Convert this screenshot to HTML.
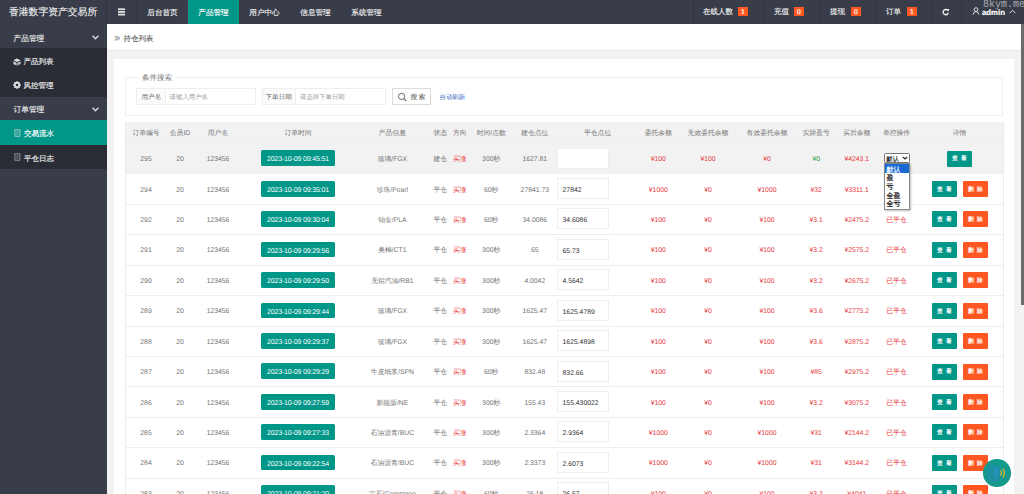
<!DOCTYPE html>
<html><head><meta charset="utf-8"><title>持仓列表</title>
<style>
*{margin:0;padding:0;box-sizing:border-box}
html,body{width:1024px;height:494px;overflow:hidden;background:#f2f2f2;font-family:"Liberation Sans",sans-serif;color:#666;text-rendering:geometricPrecision}
.a{position:absolute;white-space:nowrap}
#top{position:absolute;left:0;top:0;width:1024px;height:24px;background:#393D49;-webkit-text-stroke:0.15px currentColor}
#logo{position:absolute;left:0;top:1px;width:106px;height:24px;line-height:24px;color:#ececec;font-size:9.8px;padding-left:9px;white-space:nowrap}
.nav{position:absolute;top:0;height:24px;line-height:24px;color:#ececec;font-size:7.6px;text-align:center;white-space:nowrap}
.nav span{position:relative;top:0.7px}
.nav.on{background:#009688;color:#fff}
.sep{position:absolute;top:0;width:1px;height:24px;background:#33363f}
.bdg{position:absolute;top:7px;width:10px;height:9px;background:#FF5722;color:#fff;font-size:6.8px;line-height:9px;text-align:center}
.bdg span{position:relative;top:1.2px}
#side{position:absolute;left:0;top:24px;width:107px;height:470px;background:#393D49}
.sb{position:absolute;left:0;width:107px}
.st{position:absolute;height:24px;line-height:24px;color:#ececec;font-size:7.6px;white-space:nowrap;-webkit-text-stroke:0.15px currentColor}
#crumb{position:absolute;left:107px;top:24px;width:917px;height:27px;background:#fff;border-bottom:1px solid #e8e8e8}
#card{position:absolute;left:113.5px;top:59px;width:900.5px;height:435px;background:#fff}
.fs{position:absolute;left:125px;top:76.5px;width:878px;height:39.5px;border:1px solid #eeeeee}
.legend{position:absolute;left:139px;top:72.7px;padding:0 3px;background:#fff;font-size:7.5px;line-height:10px;color:#777}
.lbl{position:absolute;top:88px;height:17.4px;border:1px solid #eeeeee;background:#FBFBFB}
.ipt{position:absolute;top:88px;height:17.4px;border:1px solid #eeeeee;border-left:none;background:#fff}
.sbtn{position:absolute;left:391.5px;top:88.2px;width:39.2px;height:17.3px;border:1px solid #dcdcdc;background:#fff}
.tx{position:absolute;line-height:10px;white-space:nowrap}
.thead{position:absolute;background:#F2F2F2}
.tr{position:absolute;border-top:1px solid #eeeeee;background:#fff}
.tr.hov{background:#F2F2F2}
.c{position:absolute;width:120px;text-align:center;font-size:6.8px;color:#737373;white-space:nowrap}
.red{color:#e8393c}
.green{color:#22a03a}
.badge{position:absolute;width:74px;height:15.8px;line-height:15.8px;background:#009688;color:#fff;border-radius:1.5px;text-align:center;font-size:7px;letter-spacing:-0.15px;white-space:nowrap}
.badge span{position:relative;top:2px}
.inp{position:absolute;width:52.5px;height:21px;line-height:19px;border:1px solid #eeeeee;background:#fff;color:#333;font-size:6.8px;padding-left:5px;white-space:nowrap}
.inp span{position:relative;top:2px}
.btn{position:absolute;width:25px;height:16px;line-height:16px;letter-spacing:3.2px;text-indent:3.2px;text-align:center;color:#fff;font-size:5.8px;font-weight:bold;border-radius:1px;white-space:nowrap;-webkit-text-stroke:0}
.btn span{position:relative;top:0.9px}
.teal{background:#009688}
.orange{background:#FF5722}
</style></head><body>
<div id="top">
  <div id="logo">香港数字资产交易所</div>
  <div class="sep" style="left:106px"></div>
  <svg width="9" height="8" viewBox="0 0 9 8" style="position:absolute;left:117px;top:7.5px"><rect x="1" y="0.3" width="7" height="1.8" fill="#e0e0e0"/><rect x="1" y="3.0" width="7" height="1.8" fill="#e0e0e0"/><rect x="1" y="5.7" width="7" height="1.8" fill="#e0e0e0"/></svg>
  <div class="sep" style="left:136px"></div>
  <div class="nav" style="left:137px;width:51px"><span>后台首页</span></div>
  <div class="nav on" style="left:188px;width:51px"><span>产品管理</span></div>
  <div class="nav" style="left:239px;width:51px"><span>用户中心</span></div>
  <div class="nav" style="left:290px;width:51px"><span>信息管理</span></div>
  <div class="nav" style="left:341px;width:51px"><span>系统管理</span></div>

  <div class="sep" style="left:693px"></div>
  <div class="nav" style="left:703px;width:30px;font-size:7.5px">在线人数</div><div class="bdg" style="left:738px"><span>1</span></div>
  <div class="sep" style="left:763px"></div>
  <div class="nav" style="left:774px;width:15px;font-size:7.5px">充值</div><div class="bdg" style="left:794px"><span>0</span></div>
  <div class="sep" style="left:819px"></div>
  <div class="nav" style="left:830px;width:15px;font-size:7.5px">提现</div><div class="bdg" style="left:851px"><span>0</span></div>
  <div class="sep" style="left:875px"></div>
  <div class="nav" style="left:886px;width:15px;font-size:7.5px">订单</div><div class="bdg" style="left:907px"><span>1</span></div>
  <div class="sep" style="left:932px"></div>
  <svg width="8" height="8" viewBox="0 0 8 8" style="position:absolute;left:942px;top:8px"><path d="M5.9 2.6 A2.6 2.6 0 1 0 6.3 4.8" fill="none" stroke="#eee" stroke-width="1.4"/><path d="M4.6 1 L7 1 L7 3.4 Z" fill="#eee"/></svg>
  <div class="sep" style="left:961px"></div>
  <svg width="8" height="8" viewBox="0 0 8 8" style="position:absolute;left:972px;top:7px"><circle cx="4" cy="2.6" r="1.9" fill="none" stroke="#ddd" stroke-width="1"/><path d="M1 7.6 Q1.5 4.6 4 4.6 Q6.5 4.6 7 7.6" fill="none" stroke="#ddd" stroke-width="1"/></svg>
  <div class="nav" style="left:982px;width:23px;font-weight:bold;color:#fff;font-size:7.8px"><span>admin</span></div>
  <svg width="7" height="5" viewBox="0 0 7 5" style="position:absolute;left:1009px;top:9px"><path d="M0.7 4.2 L3.5 1.2 L6.3 4.2" fill="none" stroke="#ddd" stroke-width="1"/></svg>
  <div style="position:absolute;left:983px;top:0px;font-family:'Liberation Mono',monospace;font-size:10px;line-height:10px;color:rgba(215,215,218,0.72);transform:scaleY(1.1);transform-origin:0 0;-webkit-text-stroke:0">8kym.me</div>
</div>

<div id="side"></div>
<div class="sb" style="top:48.4px;height:48.6px;background:#2A2D36"></div>
<div class="sb" style="top:120.4px;height:24.6px;background:#009688"></div>
<div class="sb" style="top:145px;height:24.4px;background:#2A2D36"></div>
<div class="st" style="left:13.5px;top:26.6px;font-size:7.7px">产品管理</div>
<svg width="7" height="5" viewBox="0 0 7 5" style="position:absolute;left:91.5px;top:34.5px"><path d="M0.6 0.8 L3.5 3.8 L6.4 0.8" fill="none" stroke="#ddd" stroke-width="1.3"/></svg>
<svg width="8" height="8" viewBox="0 0 8 8" style="position:absolute;left:13px;top:57.5px"><path d="M4 0.6 L7.6 2.3 L4 4 L0.4 2.3 Z" fill="#e0e0e0"/><path d="M0.4 3.3 L3.6 4.8 L3.6 7.6 L0.4 6 Z" fill="#cfcfcf"/><path d="M7.6 3.3 L4.4 4.8 L4.4 7.6 L7.6 6 Z" fill="#bdbdbd"/></svg>
<div class="st" style="left:23.4px;top:50.1px;font-size:7.5px">产品列表</div>
<svg width="8" height="8" viewBox="0 0 8 8" style="position:absolute;left:13px;top:81px"><path d="M7.81 3.15 L7.81 4.85 L6.72 4.99 L6.63 5.22 L7.29 6.09 L6.09 7.29 L5.22 6.63 L4.99 6.72 L4.85 7.81 L3.15 7.81 L3.01 6.72 L2.78 6.63 L1.91 7.29 L0.71 6.09 L1.37 5.22 L1.28 4.99 L0.19 4.85 L0.19 3.15 L1.28 3.01 L1.37 2.78 L0.71 1.91 L1.91 0.71 L2.78 1.37 L3.01 1.28 L3.15 0.19 L4.85 0.19 L4.99 1.28 L5.22 1.37 L6.09 0.71 L7.29 1.91 L6.63 2.78 L6.72 3.01Z M5.3 4 A1.3 1.3 0 1 0 2.7 4 A1.3 1.3 0 1 0 5.3 4Z" fill="#ddd" fill-rule="evenodd"/></svg>
<div class="st" style="left:23.4px;top:73.9px;font-size:7.5px">风控管理</div>
<div class="st" style="left:13.5px;top:98.4px;font-size:7.7px">订单管理</div>
<svg width="7" height="5" viewBox="0 0 7 5" style="position:absolute;left:91.5px;top:106.5px"><path d="M0.6 0.8 L3.5 3.8 L6.4 0.8" fill="none" stroke="#ddd" stroke-width="1.3"/></svg>
<svg width="7" height="8" viewBox="0 0 7 8" style="position:absolute;left:14px;top:129.3px"><rect x="0.9" y="0.8" width="5" height="6.4" fill="none" stroke="#c8d8d6" stroke-width="0.8"/><path d="M2.3 2.8 H4.5 M2.3 4.2 H4.5 M2.3 5.6 H3.8" stroke="#c8d8d6" stroke-width="0.6"/></svg>
<div class="st" style="left:24px;top:122.2px;font-size:7.5px;color:#fff">交易流水</div>
<svg width="7" height="8" viewBox="0 0 7 8" style="position:absolute;left:14px;top:153.3px"><rect x="0.9" y="0.8" width="5" height="6.4" fill="none" stroke="#aaa" stroke-width="0.8"/><path d="M2.3 2.8 H4.5 M2.3 4.2 H4.5 M2.3 5.6 H3.8" stroke="#aaa" stroke-width="0.6"/></svg>
<div class="st" style="left:24px;top:146.7px;font-size:7.5px">平仓日志</div>

<div id="crumb">
  <div style="position:absolute;left:7.3px;top:1.2px;line-height:27px;font-size:10.5px;color:#999;white-space:nowrap;-webkit-text-stroke:0.3px currentColor">»</div><div style="position:absolute;left:16.5px;top:0.5px;line-height:27px;font-size:7.45px;color:#555;white-space:nowrap;-webkit-text-stroke:0.08px currentColor">持仓列表</div>
</div>
<div id="card"></div>
<div class="fs"></div>
<div class="legend">条件搜索</div>
<div class="lbl" style="left:136px;width:30px"></div>
<div class="tx" style="left:141.5px;top:93.1px;font-size:6.6px;color:#666">用户名</div>
<div class="ipt" style="left:166px;width:90px"></div>
<div class="tx" style="left:169.6px;top:93px;font-size:6.4px;color:#a0a0a0">请输入用户名</div>
<div class="lbl" style="left:262px;width:34px"></div>
<div class="tx" style="left:265.5px;top:93.1px;font-size:6.6px;color:#666">下单日期</div>
<div class="ipt" style="left:296px;width:90px"></div>
<div class="tx" style="left:300px;top:93px;font-size:6.4px;color:#a0a0a0">请选择下单日期</div>
<div class="sbtn"></div>
<svg width="10" height="10" viewBox="0 0 10 10" style="position:absolute;left:397px;top:92px"><circle cx="4.6" cy="4.4" r="3.1" fill="none" stroke="#666" stroke-width="1"/><path d="M6.9 6.7 L9.2 9" stroke="#666" stroke-width="1.2"/></svg>
<div class="tx" style="left:410.5px;top:93px;font-size:6.8px;color:#444;letter-spacing:1.2px">搜索</div>
<div class="tx" style="left:439.5px;top:93px;font-size:6.4px;color:#3568c8">自动刷新</div>

<div class="thead" style="left:125px;top:122px;width:878px;height:21px"></div>
<div class="c hc" style="left:86.0px;top:122.70px;height:21px;line-height:21px">订单编号</div>
<div class="c hc" style="left:120.0px;top:122.70px;height:21px;line-height:21px">会员ID</div>
<div class="c hc" style="left:158.0px;top:122.70px;height:21px;line-height:21px">用户名</div>
<div class="c hc" style="left:238.0px;top:122.70px;height:21px;line-height:21px">订单时间</div>
<div class="c hc" style="left:332.4px;top:122.70px;height:21px;line-height:21px">产品信息</div>
<div class="c hc" style="left:380.3px;top:122.70px;height:21px;line-height:21px">状态</div>
<div class="c hc" style="left:399.7px;top:122.70px;height:21px;line-height:21px">方向</div>
<div class="c hc" style="left:431.2px;top:122.70px;height:21px;line-height:21px">时间/点数</div>
<div class="c hc" style="left:474.8px;top:122.70px;height:21px;line-height:21px">建仓点位</div>
<div class="c hc" style="left:537.6px;top:122.70px;height:21px;line-height:21px">平仓点位</div>
<div class="c hc" style="left:598.3px;top:122.70px;height:21px;line-height:21px">委托余额</div>
<div class="c hc" style="left:648.0px;top:122.70px;height:21px;line-height:21px">无效委托余额</div>
<div class="c hc" style="left:707.0px;top:122.70px;height:21px;line-height:21px">有效委托余额</div>
<div class="c hc" style="left:756.2px;top:122.70px;height:21px;line-height:21px">实际盈亏</div>
<div class="c hc" style="left:796.8px;top:122.70px;height:21px;line-height:21px">买后余额</div>
<div class="c hc" style="left:836.5px;top:122.70px;height:21px;line-height:21px">单控操作</div>
<div class="c hc" style="left:899.6px;top:122.70px;height:21px;line-height:21px">详情</div>
<div class="tr hov" style="left:125px;top:142.9px;width:878px;height:30.43px"></div>
<div class="c" style="left:86.0px;top:145.10px;height:30.43px;line-height:30.43px">295</div>
<div class="c" style="left:120.0px;top:145.10px;height:30.43px;line-height:30.43px">20</div>
<div class="c" style="left:158.0px;top:145.10px;height:30.43px;line-height:30.43px">123456</div>
<div class="badge" style="left:261px;top:150.4px"><span>2023-10-09 09:45:51</span></div>
<div class="c" style="left:332.4px;top:145.10px;height:30.43px;line-height:30.43px">玻璃/FGX</div>
<div class="c" style="left:380.3px;top:145.10px;height:30.43px;line-height:30.43px">建仓</div>
<div class="c red" style="left:399.7px;top:145.10px;height:30.43px;line-height:30.43px">买涨</div>
<div class="c" style="left:431.2px;top:145.10px;height:30.43px;line-height:30.43px">300秒</div>
<div class="c" style="left:474.8px;top:145.10px;height:30.43px;line-height:30.43px">1627.81</div>
<div class="inp" style="left:556.6px;top:147.5px"><span></span></div>
<div class="c red" style="left:598.3px;top:145.10px;height:30.43px;line-height:30.43px">¥100</div>
<div class="c red" style="left:648.0px;top:145.10px;height:30.43px;line-height:30.43px">¥100</div>
<div class="c red" style="left:707.0px;top:145.10px;height:30.43px;line-height:30.43px">¥0</div>
<div class="c green" style="left:756.2px;top:145.10px;height:30.43px;line-height:30.43px">¥0</div>
<div class="c red" style="left:796.8px;top:145.10px;height:30.43px;line-height:30.43px">¥4243.1</div>
<div class="btn teal" style="left:947px;top:150.5px"><span>查看</span></div>
<div class="tr" style="left:125px;top:173.3px;width:878px;height:30.43px"></div>
<div class="c" style="left:86.0px;top:175.53px;height:30.43px;line-height:30.43px">294</div>
<div class="c" style="left:120.0px;top:175.53px;height:30.43px;line-height:30.43px">20</div>
<div class="c" style="left:158.0px;top:175.53px;height:30.43px;line-height:30.43px">123456</div>
<div class="badge" style="left:261px;top:180.8px"><span>2023-10-09 09:35:01</span></div>
<div class="c" style="left:332.4px;top:175.53px;height:30.43px;line-height:30.43px">珍珠/Pearl</div>
<div class="c" style="left:380.3px;top:175.53px;height:30.43px;line-height:30.43px">平仓</div>
<div class="c red" style="left:399.7px;top:175.53px;height:30.43px;line-height:30.43px">买涨</div>
<div class="c" style="left:431.2px;top:175.53px;height:30.43px;line-height:30.43px">60秒</div>
<div class="c" style="left:474.8px;top:175.53px;height:30.43px;line-height:30.43px">27841.73</div>
<div class="inp" style="left:556.6px;top:177.9px"><span>27842</span></div>
<div class="c red" style="left:598.3px;top:175.53px;height:30.43px;line-height:30.43px">¥1000</div>
<div class="c red" style="left:648.0px;top:175.53px;height:30.43px;line-height:30.43px">¥0</div>
<div class="c red" style="left:707.0px;top:175.53px;height:30.43px;line-height:30.43px">¥1000</div>
<div class="c red" style="left:756.2px;top:175.53px;height:30.43px;line-height:30.43px">¥32</div>
<div class="c red" style="left:796.8px;top:175.53px;height:30.43px;line-height:30.43px">¥3311.1</div>
<div class="c red" style="left:836.5px;top:175.53px;height:30.43px;line-height:30.43px">已平仓</div>
<div class="btn teal" style="left:932px;top:180.9px"><span>查看</span></div>
<div class="btn orange" style="left:963px;top:180.9px"><span>删除</span></div>
<div class="tr" style="left:125px;top:203.8px;width:878px;height:30.43px"></div>
<div class="c" style="left:86.0px;top:205.96px;height:30.43px;line-height:30.43px">292</div>
<div class="c" style="left:120.0px;top:205.96px;height:30.43px;line-height:30.43px">20</div>
<div class="c" style="left:158.0px;top:205.96px;height:30.43px;line-height:30.43px">123456</div>
<div class="badge" style="left:261px;top:211.3px"><span>2023-10-09 09:30:04</span></div>
<div class="c" style="left:332.4px;top:205.96px;height:30.43px;line-height:30.43px">铂金/PLA</div>
<div class="c" style="left:380.3px;top:205.96px;height:30.43px;line-height:30.43px">平仓</div>
<div class="c red" style="left:399.7px;top:205.96px;height:30.43px;line-height:30.43px">买涨</div>
<div class="c" style="left:431.2px;top:205.96px;height:30.43px;line-height:30.43px">60秒</div>
<div class="c" style="left:474.8px;top:205.96px;height:30.43px;line-height:30.43px">34.0086</div>
<div class="inp" style="left:556.6px;top:208.4px"><span>34.6086</span></div>
<div class="c red" style="left:598.3px;top:205.96px;height:30.43px;line-height:30.43px">¥100</div>
<div class="c red" style="left:648.0px;top:205.96px;height:30.43px;line-height:30.43px">¥0</div>
<div class="c red" style="left:707.0px;top:205.96px;height:30.43px;line-height:30.43px">¥100</div>
<div class="c red" style="left:756.2px;top:205.96px;height:30.43px;line-height:30.43px">¥3.1</div>
<div class="c red" style="left:796.8px;top:205.96px;height:30.43px;line-height:30.43px">¥2475.2</div>
<div class="c red" style="left:836.5px;top:205.96px;height:30.43px;line-height:30.43px">已平仓</div>
<div class="btn teal" style="left:932px;top:211.4px"><span>查看</span></div>
<div class="btn orange" style="left:963px;top:211.4px"><span>删除</span></div>
<div class="tr" style="left:125px;top:234.2px;width:878px;height:30.43px"></div>
<div class="c" style="left:86.0px;top:236.39px;height:30.43px;line-height:30.43px">291</div>
<div class="c" style="left:120.0px;top:236.39px;height:30.43px;line-height:30.43px">20</div>
<div class="c" style="left:158.0px;top:236.39px;height:30.43px;line-height:30.43px">123456</div>
<div class="badge" style="left:261px;top:241.7px"><span>2023-10-09 09:29:56</span></div>
<div class="c" style="left:332.4px;top:236.39px;height:30.43px;line-height:30.43px">美棉/CT1</div>
<div class="c" style="left:380.3px;top:236.39px;height:30.43px;line-height:30.43px">平仓</div>
<div class="c red" style="left:399.7px;top:236.39px;height:30.43px;line-height:30.43px">买涨</div>
<div class="c" style="left:431.2px;top:236.39px;height:30.43px;line-height:30.43px">300秒</div>
<div class="c" style="left:474.8px;top:236.39px;height:30.43px;line-height:30.43px">65</div>
<div class="inp" style="left:556.6px;top:238.8px"><span>65.73</span></div>
<div class="c red" style="left:598.3px;top:236.39px;height:30.43px;line-height:30.43px">¥100</div>
<div class="c red" style="left:648.0px;top:236.39px;height:30.43px;line-height:30.43px">¥0</div>
<div class="c red" style="left:707.0px;top:236.39px;height:30.43px;line-height:30.43px">¥100</div>
<div class="c red" style="left:756.2px;top:236.39px;height:30.43px;line-height:30.43px">¥3.2</div>
<div class="c red" style="left:796.8px;top:236.39px;height:30.43px;line-height:30.43px">¥2575.2</div>
<div class="c red" style="left:836.5px;top:236.39px;height:30.43px;line-height:30.43px">已平仓</div>
<div class="btn teal" style="left:932px;top:241.8px"><span>查看</span></div>
<div class="btn orange" style="left:963px;top:241.8px"><span>删除</span></div>
<div class="tr" style="left:125px;top:264.6px;width:878px;height:30.43px"></div>
<div class="c" style="left:86.0px;top:266.82px;height:30.43px;line-height:30.43px">290</div>
<div class="c" style="left:120.0px;top:266.82px;height:30.43px;line-height:30.43px">20</div>
<div class="c" style="left:158.0px;top:266.82px;height:30.43px;line-height:30.43px">123456</div>
<div class="badge" style="left:261px;top:272.1px"><span>2023-10-09 09:29:50</span></div>
<div class="c" style="left:332.4px;top:266.82px;height:30.43px;line-height:30.43px">无铅汽油/RB1</div>
<div class="c" style="left:380.3px;top:266.82px;height:30.43px;line-height:30.43px">平仓</div>
<div class="c red" style="left:399.7px;top:266.82px;height:30.43px;line-height:30.43px">买涨</div>
<div class="c" style="left:431.2px;top:266.82px;height:30.43px;line-height:30.43px">300秒</div>
<div class="c" style="left:474.8px;top:266.82px;height:30.43px;line-height:30.43px">4.0042</div>
<div class="inp" style="left:556.6px;top:269.2px"><span>4.5642</span></div>
<div class="c red" style="left:598.3px;top:266.82px;height:30.43px;line-height:30.43px">¥100</div>
<div class="c red" style="left:648.0px;top:266.82px;height:30.43px;line-height:30.43px">¥0</div>
<div class="c red" style="left:707.0px;top:266.82px;height:30.43px;line-height:30.43px">¥100</div>
<div class="c red" style="left:756.2px;top:266.82px;height:30.43px;line-height:30.43px">¥3.2</div>
<div class="c red" style="left:796.8px;top:266.82px;height:30.43px;line-height:30.43px">¥2675.2</div>
<div class="c red" style="left:836.5px;top:266.82px;height:30.43px;line-height:30.43px">已平仓</div>
<div class="btn teal" style="left:932px;top:272.2px"><span>查看</span></div>
<div class="btn orange" style="left:963px;top:272.2px"><span>删除</span></div>
<div class="tr" style="left:125px;top:295.1px;width:878px;height:30.43px"></div>
<div class="c" style="left:86.0px;top:297.25px;height:30.43px;line-height:30.43px">289</div>
<div class="c" style="left:120.0px;top:297.25px;height:30.43px;line-height:30.43px">20</div>
<div class="c" style="left:158.0px;top:297.25px;height:30.43px;line-height:30.43px">123456</div>
<div class="badge" style="left:261px;top:302.6px"><span>2023-10-09 09:29:44</span></div>
<div class="c" style="left:332.4px;top:297.25px;height:30.43px;line-height:30.43px">玻璃/FGX</div>
<div class="c" style="left:380.3px;top:297.25px;height:30.43px;line-height:30.43px">平仓</div>
<div class="c red" style="left:399.7px;top:297.25px;height:30.43px;line-height:30.43px">买涨</div>
<div class="c" style="left:431.2px;top:297.25px;height:30.43px;line-height:30.43px">300秒</div>
<div class="c" style="left:474.8px;top:297.25px;height:30.43px;line-height:30.43px">1625.47</div>
<div class="inp" style="left:556.6px;top:299.7px"><span>1625.4789</span></div>
<div class="c red" style="left:598.3px;top:297.25px;height:30.43px;line-height:30.43px">¥100</div>
<div class="c red" style="left:648.0px;top:297.25px;height:30.43px;line-height:30.43px">¥0</div>
<div class="c red" style="left:707.0px;top:297.25px;height:30.43px;line-height:30.43px">¥100</div>
<div class="c red" style="left:756.2px;top:297.25px;height:30.43px;line-height:30.43px">¥3.6</div>
<div class="c red" style="left:796.8px;top:297.25px;height:30.43px;line-height:30.43px">¥2775.2</div>
<div class="c red" style="left:836.5px;top:297.25px;height:30.43px;line-height:30.43px">已平仓</div>
<div class="btn teal" style="left:932px;top:302.7px"><span>查看</span></div>
<div class="btn orange" style="left:963px;top:302.7px"><span>删除</span></div>
<div class="tr" style="left:125px;top:325.5px;width:878px;height:30.43px"></div>
<div class="c" style="left:86.0px;top:327.68px;height:30.43px;line-height:30.43px">288</div>
<div class="c" style="left:120.0px;top:327.68px;height:30.43px;line-height:30.43px">20</div>
<div class="c" style="left:158.0px;top:327.68px;height:30.43px;line-height:30.43px">123456</div>
<div class="badge" style="left:261px;top:333.0px"><span>2023-10-09 09:29:37</span></div>
<div class="c" style="left:332.4px;top:327.68px;height:30.43px;line-height:30.43px">玻璃/FGX</div>
<div class="c" style="left:380.3px;top:327.68px;height:30.43px;line-height:30.43px">平仓</div>
<div class="c red" style="left:399.7px;top:327.68px;height:30.43px;line-height:30.43px">买涨</div>
<div class="c" style="left:431.2px;top:327.68px;height:30.43px;line-height:30.43px">300秒</div>
<div class="c" style="left:474.8px;top:327.68px;height:30.43px;line-height:30.43px">1625.47</div>
<div class="inp" style="left:556.6px;top:330.1px"><span>1625.4898</span></div>
<div class="c red" style="left:598.3px;top:327.68px;height:30.43px;line-height:30.43px">¥100</div>
<div class="c red" style="left:648.0px;top:327.68px;height:30.43px;line-height:30.43px">¥0</div>
<div class="c red" style="left:707.0px;top:327.68px;height:30.43px;line-height:30.43px">¥100</div>
<div class="c red" style="left:756.2px;top:327.68px;height:30.43px;line-height:30.43px">¥3.6</div>
<div class="c red" style="left:796.8px;top:327.68px;height:30.43px;line-height:30.43px">¥2875.2</div>
<div class="c red" style="left:836.5px;top:327.68px;height:30.43px;line-height:30.43px">已平仓</div>
<div class="btn teal" style="left:932px;top:333.1px"><span>查看</span></div>
<div class="btn orange" style="left:963px;top:333.1px"><span>删除</span></div>
<div class="tr" style="left:125px;top:355.9px;width:878px;height:30.43px"></div>
<div class="c" style="left:86.0px;top:358.11px;height:30.43px;line-height:30.43px">287</div>
<div class="c" style="left:120.0px;top:358.11px;height:30.43px;line-height:30.43px">20</div>
<div class="c" style="left:158.0px;top:358.11px;height:30.43px;line-height:30.43px">123456</div>
<div class="badge" style="left:261px;top:363.4px"><span>2023-10-09 09:29:29</span></div>
<div class="c" style="left:332.4px;top:358.11px;height:30.43px;line-height:30.43px">牛皮纸浆/SPN</div>
<div class="c" style="left:380.3px;top:358.11px;height:30.43px;line-height:30.43px">平仓</div>
<div class="c red" style="left:399.7px;top:358.11px;height:30.43px;line-height:30.43px">买涨</div>
<div class="c" style="left:431.2px;top:358.11px;height:30.43px;line-height:30.43px">60秒</div>
<div class="c" style="left:474.8px;top:358.11px;height:30.43px;line-height:30.43px">832.48</div>
<div class="inp" style="left:556.6px;top:360.5px"><span>832.66</span></div>
<div class="c red" style="left:598.3px;top:358.11px;height:30.43px;line-height:30.43px">¥100</div>
<div class="c red" style="left:648.0px;top:358.11px;height:30.43px;line-height:30.43px">¥0</div>
<div class="c red" style="left:707.0px;top:358.11px;height:30.43px;line-height:30.43px">¥100</div>
<div class="c red" style="left:756.2px;top:358.11px;height:30.43px;line-height:30.43px">¥85</div>
<div class="c red" style="left:796.8px;top:358.11px;height:30.43px;line-height:30.43px">¥2975.2</div>
<div class="c red" style="left:836.5px;top:358.11px;height:30.43px;line-height:30.43px">已平仓</div>
<div class="btn teal" style="left:932px;top:363.5px"><span>查看</span></div>
<div class="btn orange" style="left:963px;top:363.5px"><span>删除</span></div>
<div class="tr" style="left:125px;top:386.3px;width:878px;height:30.43px"></div>
<div class="c" style="left:86.0px;top:388.54px;height:30.43px;line-height:30.43px">286</div>
<div class="c" style="left:120.0px;top:388.54px;height:30.43px;line-height:30.43px">20</div>
<div class="c" style="left:158.0px;top:388.54px;height:30.43px;line-height:30.43px">123456</div>
<div class="badge" style="left:261px;top:393.8px"><span>2023-10-09 09:27:59</span></div>
<div class="c" style="left:332.4px;top:388.54px;height:30.43px;line-height:30.43px">新能源/NE</div>
<div class="c" style="left:380.3px;top:388.54px;height:30.43px;line-height:30.43px">平仓</div>
<div class="c red" style="left:399.7px;top:388.54px;height:30.43px;line-height:30.43px">买涨</div>
<div class="c" style="left:431.2px;top:388.54px;height:30.43px;line-height:30.43px">300秒</div>
<div class="c" style="left:474.8px;top:388.54px;height:30.43px;line-height:30.43px">155.43</div>
<div class="inp" style="left:556.6px;top:390.9px"><span>155.430022</span></div>
<div class="c red" style="left:598.3px;top:388.54px;height:30.43px;line-height:30.43px">¥100</div>
<div class="c red" style="left:648.0px;top:388.54px;height:30.43px;line-height:30.43px">¥0</div>
<div class="c red" style="left:707.0px;top:388.54px;height:30.43px;line-height:30.43px">¥100</div>
<div class="c red" style="left:756.2px;top:388.54px;height:30.43px;line-height:30.43px">¥3.2</div>
<div class="c red" style="left:796.8px;top:388.54px;height:30.43px;line-height:30.43px">¥3075.2</div>
<div class="c red" style="left:836.5px;top:388.54px;height:30.43px;line-height:30.43px">已平仓</div>
<div class="btn teal" style="left:932px;top:393.9px"><span>查看</span></div>
<div class="btn orange" style="left:963px;top:393.9px"><span>删除</span></div>
<div class="tr" style="left:125px;top:416.8px;width:878px;height:30.43px"></div>
<div class="c" style="left:86.0px;top:418.97px;height:30.43px;line-height:30.43px">285</div>
<div class="c" style="left:120.0px;top:418.97px;height:30.43px;line-height:30.43px">20</div>
<div class="c" style="left:158.0px;top:418.97px;height:30.43px;line-height:30.43px">123456</div>
<div class="badge" style="left:261px;top:424.3px"><span>2023-10-09 09:27:33</span></div>
<div class="c" style="left:332.4px;top:418.97px;height:30.43px;line-height:30.43px">石油沥青/BUC</div>
<div class="c" style="left:380.3px;top:418.97px;height:30.43px;line-height:30.43px">平仓</div>
<div class="c red" style="left:399.7px;top:418.97px;height:30.43px;line-height:30.43px">买涨</div>
<div class="c" style="left:431.2px;top:418.97px;height:30.43px;line-height:30.43px">300秒</div>
<div class="c" style="left:474.8px;top:418.97px;height:30.43px;line-height:30.43px">2.3364</div>
<div class="inp" style="left:556.6px;top:421.4px"><span>2.9364</span></div>
<div class="c red" style="left:598.3px;top:418.97px;height:30.43px;line-height:30.43px">¥1000</div>
<div class="c red" style="left:648.0px;top:418.97px;height:30.43px;line-height:30.43px">¥0</div>
<div class="c red" style="left:707.0px;top:418.97px;height:30.43px;line-height:30.43px">¥1000</div>
<div class="c red" style="left:756.2px;top:418.97px;height:30.43px;line-height:30.43px">¥31</div>
<div class="c red" style="left:796.8px;top:418.97px;height:30.43px;line-height:30.43px">¥2144.2</div>
<div class="c red" style="left:836.5px;top:418.97px;height:30.43px;line-height:30.43px">已平仓</div>
<div class="btn teal" style="left:932px;top:424.4px"><span>查看</span></div>
<div class="btn orange" style="left:963px;top:424.4px"><span>删除</span></div>
<div class="tr" style="left:125px;top:447.2px;width:878px;height:30.43px"></div>
<div class="c" style="left:86.0px;top:449.40px;height:30.43px;line-height:30.43px">284</div>
<div class="c" style="left:120.0px;top:449.40px;height:30.43px;line-height:30.43px">20</div>
<div class="c" style="left:158.0px;top:449.40px;height:30.43px;line-height:30.43px">123456</div>
<div class="badge" style="left:261px;top:454.7px"><span>2023-10-09 09:22:54</span></div>
<div class="c" style="left:332.4px;top:449.40px;height:30.43px;line-height:30.43px">石油沥青/BUC</div>
<div class="c" style="left:380.3px;top:449.40px;height:30.43px;line-height:30.43px">平仓</div>
<div class="c red" style="left:399.7px;top:449.40px;height:30.43px;line-height:30.43px">买涨</div>
<div class="c" style="left:431.2px;top:449.40px;height:30.43px;line-height:30.43px">300秒</div>
<div class="c" style="left:474.8px;top:449.40px;height:30.43px;line-height:30.43px">2.3373</div>
<div class="inp" style="left:556.6px;top:451.8px"><span>2.6073</span></div>
<div class="c red" style="left:598.3px;top:449.40px;height:30.43px;line-height:30.43px">¥1000</div>
<div class="c red" style="left:648.0px;top:449.40px;height:30.43px;line-height:30.43px">¥0</div>
<div class="c red" style="left:707.0px;top:449.40px;height:30.43px;line-height:30.43px">¥1000</div>
<div class="c red" style="left:756.2px;top:449.40px;height:30.43px;line-height:30.43px">¥31</div>
<div class="c red" style="left:796.8px;top:449.40px;height:30.43px;line-height:30.43px">¥3144.2</div>
<div class="c red" style="left:836.5px;top:449.40px;height:30.43px;line-height:30.43px">已平仓</div>
<div class="btn teal" style="left:932px;top:454.8px"><span>查看</span></div>
<div class="btn orange" style="left:963px;top:454.8px"><span>删除</span></div>
<div class="tr" style="left:125px;top:477.6px;width:878px;height:30.43px"></div>
<div class="c" style="left:86.0px;top:479.83px;height:30.43px;line-height:30.43px">283</div>
<div class="c" style="left:120.0px;top:479.83px;height:30.43px;line-height:30.43px">20</div>
<div class="c" style="left:158.0px;top:479.83px;height:30.43px;line-height:30.43px">123456</div>
<div class="badge" style="left:261px;top:485.1px"><span>2023-10-09 09:21:20</span></div>
<div class="c" style="left:332.4px;top:479.83px;height:30.43px;line-height:30.43px">宝石/Gemstone</div>
<div class="c" style="left:380.3px;top:479.83px;height:30.43px;line-height:30.43px">平仓</div>
<div class="c red" style="left:399.7px;top:479.83px;height:30.43px;line-height:30.43px">买涨</div>
<div class="c" style="left:431.2px;top:479.83px;height:30.43px;line-height:30.43px">60秒</div>
<div class="c" style="left:474.8px;top:479.83px;height:30.43px;line-height:30.43px">26.18</div>
<div class="inp" style="left:556.6px;top:482.2px"><span>26.57</span></div>
<div class="c red" style="left:598.3px;top:479.83px;height:30.43px;line-height:30.43px">¥100</div>
<div class="c red" style="left:648.0px;top:479.83px;height:30.43px;line-height:30.43px">¥0</div>
<div class="c red" style="left:707.0px;top:479.83px;height:30.43px;line-height:30.43px">¥100</div>
<div class="c red" style="left:756.2px;top:479.83px;height:30.43px;line-height:30.43px">¥3.2</div>
<div class="c red" style="left:796.8px;top:479.83px;height:30.43px;line-height:30.43px">¥4041</div>
<div class="c red" style="left:836.5px;top:479.83px;height:30.43px;line-height:30.43px">已平仓</div>
<div class="btn teal" style="left:932px;top:485.2px"><span>查看</span></div>
<div class="btn orange" style="left:963px;top:485.2px"><span>删除</span></div>
<div style="position:absolute;left:125px;top:122px;width:1px;height:372px;background:#ececec"></div>
<div style="position:absolute;left:1003px;top:122px;width:1px;height:372px;background:#ececec"></div>

<!-- select + dropdown -->
<div style="position:absolute;left:884px;top:153.2px;width:26px;height:9.8px;border:1px solid #767676;border-radius:1.5px;background:#fff"></div>
<div class="tx" style="left:886.5px;top:154.5px;font-size:6.2px;line-height:9px;color:#111;-webkit-text-stroke:0.15px currentColor">默认</div>
<svg width="6" height="4" viewBox="0 0 6 4" style="position:absolute;left:901.5px;top:156.3px"><path d="M0.8 0.8 L3 3 L5.2 0.8" fill="none" stroke="#222" stroke-width="1.2"/></svg>
<div style="position:absolute;left:884px;top:163px;width:26px;height:47px;border:1px solid #888;background:#fff;box-shadow:1px 1px 2px rgba(0,0,0,.25);font-size:7px;color:#000;-webkit-text-stroke:0.2px currentColor;white-space:nowrap">
  <div style="height:9.3px;line-height:9.3px;background:#1A6AD6;color:#fff;padding-left:1.5px"><span style="position:relative;top:1.5px">默认</span></div>
  <div style="height:8.8px;line-height:8.8px;padding-left:1.5px"><span style="position:relative;top:1.7px">盈</span></div>
  <div style="height:8.8px;line-height:8.8px;padding-left:1.5px"><span style="position:relative;top:1.7px">亏</span></div>
  <div style="height:8.8px;line-height:8.8px;padding-left:1.5px"><span style="position:relative;top:1.7px">全盈</span></div>
  <div style="height:8.8px;line-height:8.8px;padding-left:1.5px"><span style="position:relative;top:1.7px">全亏</span></div>
</div>

<!-- floating button -->
<div style="position:absolute;left:983px;top:459.3px;width:27.6px;height:27.6px;border-radius:50%;background:#139a8c;overflow:hidden">
  <svg width="28" height="28" viewBox="0 0 28 28" style="position:absolute;left:0;top:0"><ellipse cx="11" cy="14.5" rx="7.5" ry="9" fill="#2f7fc8" opacity="0.35"/><ellipse cx="13.5" cy="14" rx="1.6" ry="5.5" fill="#3a8ee6" opacity="0.45"/><path d="M17.6 11.2 Q19.2 14 17.6 16.8" fill="none" stroke="#d9b52a" stroke-width="1.3"/><path d="M20 9.5 Q22.6 14 20 18.5" fill="none" stroke="#d9b52a" stroke-width="1.3"/></svg>
</div>
<!-- scrollbar -->
<div style="position:absolute;left:1014px;top:51px;width:10px;height:443px;background:#f2f2f2"></div>
<div style="position:absolute;left:1021px;top:24px;width:3px;height:281px;background:#6b6b6b"></div>
</body></html>
